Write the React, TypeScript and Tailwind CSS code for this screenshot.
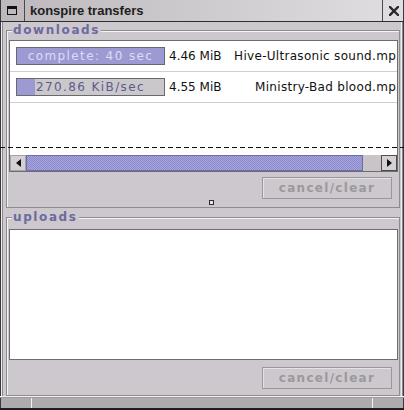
import React from "react";

function ProgressBar({ fill, text, light }: { fill: number; text: string; light?: boolean }) {
  return (
    <div className="relative w-[149px] h-[18px] border border-[#6a686e] bg-[#cbc8cb] overflow-hidden shrink-0">
      <div className="absolute top-0 bottom-0 left-0 bg-[#9c9ad2]" style={{ width: `${fill}px` }} />
      <div
        className={`relative flex h-full items-center justify-center text-[12px] leading-none tracking-[1.4px] whitespace-nowrap ${
          light ? "text-[#dcdcf2]" : "text-[#5c5a8e]"
        }`}
      >
        {text}
      </div>
    </div>
  );
}

function Row({ fill, text, light, size, name }: { fill: number; text: string; light?: boolean; size: string; name: string }) {
  return (
    <div className="flex items-center h-[31px] border-b border-[#cfcfcf] pl-[6px] shrink-0">
      <ProgressBar fill={fill} text={text} light={light} />
      <div className="ml-[4px] w-[59px] shrink-0 text-[12px] text-[#111] whitespace-nowrap">{size}</div>
      <div className="w-[176px] shrink-0 text-right text-[12px] tracking-[0.3px] text-[#111] whitespace-nowrap">{name}</div>
    </div>
  );
}

function Button() {
  return (
    <div className="self-end mr-[7px] w-[130px] h-[22px] border border-[#9a969a] shadow-[inset_1px_1px_0_#e4e2e4] flex items-center justify-center text-[12px] font-bold tracking-[1.3px] text-[#9c989c] shrink-0">
      cancel/clear
    </div>
  );
}

function Legend({ children }: { children: React.ReactNode }) {
  return (
    <legend className="ml-[5px] px-[1px] h-[14px] leading-[14px] bg-[#cdc8cd] text-[12px] font-bold tracking-[1.6px] text-[#6c6aa0]">
      {children}
    </legend>
  );
}

export default function App() {
  return (
    <div className="relative w-[404px] h-[410px] bg-[#cdc8cd] font-['DejaVu_Sans',sans-serif] overflow-hidden flex flex-col">
      {/* title bar */}
      <div className="flex h-[22px] border-b border-[#2e2e2e] bg-[linear-gradient(90deg,#bcb8bc,#e0dee0)] shrink-0 shadow-[inset_1px_0_#3a3a3a,inset_-1px_0_#3a3a3a]">
        <div className="w-[25px] border-r border-[#4a4a4a] flex items-center justify-center">
          <svg width="10" height="9" viewBox="0 0 10 9">
            <rect x="0.5" y="0.5" width="9" height="8" fill="none" stroke="#111" />
            <rect x="0" y="0" width="10" height="3" fill="#111" />
          </svg>
        </div>
        <div className="flex-1 pl-[5px] flex items-center font-['Liberation_Sans',sans-serif] font-bold text-[13px] text-[#1e1e1e]">
          konspire transfers
        </div>
        <div className="w-[22px] border-l border-[#4a4a4a] flex items-center justify-center">
          <svg width="10" height="10" viewBox="0 0 10 10">
            <path d="M1 1 L9 9 M9 1 L1 9" stroke="#2a2a2a" strokeWidth="2.4" strokeLinecap="square" />
          </svg>
        </div>
      </div>

      {/* body */}
      <div className="flex-1 flex flex-col pl-[6px] pr-[4px] shadow-[inset_1px_0_#3a3a3a,inset_2px_0_#eeeeee,inset_3px_0_#8c888c,inset_-1px_0_#3a3a3a,inset_-2px_0_#8c888c,inset_-3px_0_#eeeeee]">
        {/* downloads */}
        <fieldset className="mt-[1px] w-[394px] border border-[#8e8a8e] shadow-[inset_1px_1px_0_#f4f4f4] flex flex-col">
          <Legend>downloads</Legend>
          <div className="mt-[3px] ml-[2px] w-[389px] h-[132px] border border-[#6e6c6e] bg-white flex flex-col overflow-hidden">
            <div className="h-[114px] flex flex-col overflow-hidden">
              <Row fill={147} text="complete: 40 sec" light size="4.46 MiB" name="Hive-Ultrasonic sound.mp3" />
              <Row fill={18} text="270.86 KiB/sec" size="4.55 MiB" name="Ministry-Bad blood.mp3" />
            </div>
            {/* scrollbar */}
            <div className="h-[16px] flex shrink-0 bg-[#c8c4c8]">
              <div className="w-[16px] border border-[#a6a2a6] bg-[#d4d0d4] flex items-center justify-center">
                <svg width="5" height="8" viewBox="0 0 5 8">
                  <path d="M5 0 L0 4 L5 8 Z" fill="#111" />
                </svg>
              </div>
              <div className="w-[337px] border-y border-x border-[#6e6ca8] bg-[image:repeating-conic-gradient(#8a88c8_0_25%,#a8a6de_0_50%)] bg-[length:2px_2px]" />
              <div className="flex-1" />
              <div className="w-[16px] border border-[#4e4c4e] bg-[#d4d0d4] flex items-center justify-center">
                <svg width="5" height="8" viewBox="0 0 5 8">
                  <path d="M0 0 L5 4 L0 8 Z" fill="#111" />
                </svg>
              </div>
            </div>
          </div>
          <div className="mt-[5px] flex flex-col">
            <Button />
          </div>
          <div className="mt-[1px] ml-[202px] w-[5px] h-[5px] border border-[#2e2e2e] bg-[#e6e4e6]" />
          <div className="h-[2px]" />
        </fieldset>

        {/* uploads */}
        <fieldset className="mt-[2px] w-[394px] border border-[#8e8a8e] shadow-[inset_1px_1px_0_#f4f4f4] flex flex-col">
          <Legend>uploads</Legend>
          <div className="mt-[5px] ml-[2px] w-[389px] h-[131px] border border-[#6e6c6e] bg-white" />
          <div className="mt-[7px] flex flex-col">
            <Button />
          </div>
          <div className="h-[6px]" />
        </fieldset>
      </div>

      {/* status bar */}
      <div className="h-[14px] shrink-0 flex flex-col">
        <div className="h-[1px] bg-[#f2f2f2]" />
        <div className="h-[1px] bg-[#9c989c]" />
        <div className="h-[10px] flex bg-[#aeaaae] shadow-[inset_1px_0_#3a3a3a,inset_-1px_0_#3a3a3a]">
          <div className="w-[32px] border-r border-[#f0f0f0]" />
          <div className="w-[341px] border-r border-[#f0f0f0]" />
          <div className="flex-1" />
        </div>
        <div className="h-[2px] bg-[#1e1e1e]" />
      </div>

      {/* drag guide line */}
      <div className="absolute top-[147px] left-0 w-full h-[1px] bg-[image:repeating-linear-gradient(90deg,#111_0_5px,transparent_5px_8px)]" />
    </div>
  );
}
